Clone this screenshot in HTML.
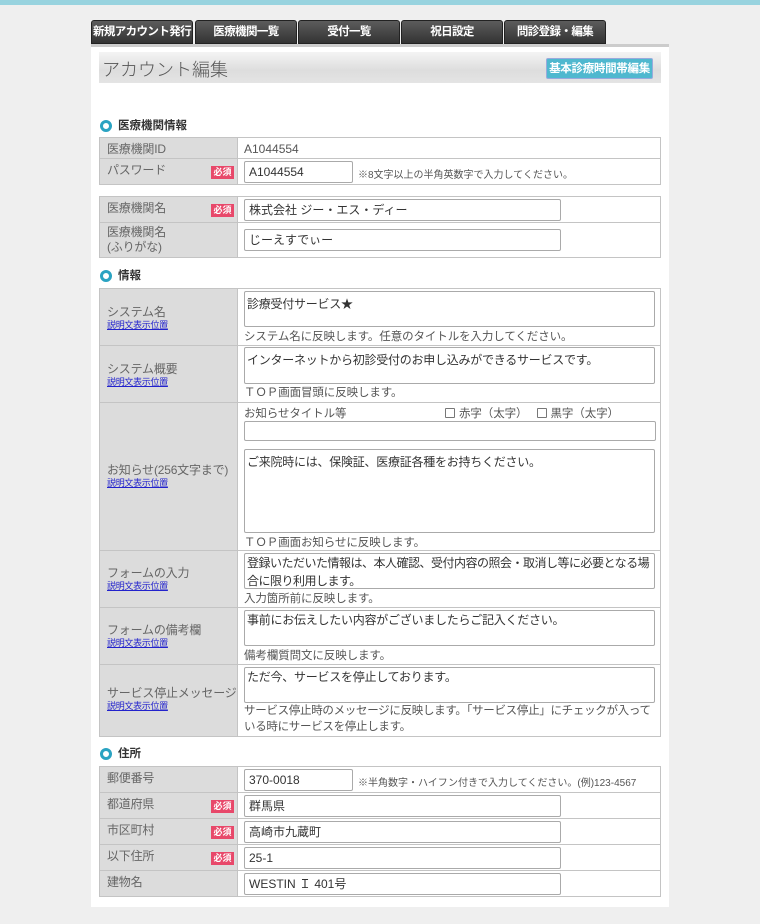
<!DOCTYPE html>
<html><head><meta charset="utf-8"><style>
*{box-sizing:border-box;margin:0;padding:0}
body{width:760px;height:924px;background:#efefef;font-family:"Liberation Sans","Noto Sans CJK JP",sans-serif;font-size:12px;color:#555;position:relative;overflow:hidden}
.a{position:absolute}
.top{left:0;top:0;width:760px;height:5px;background:#98d3df}
.tab{top:20px;height:24px;width:102px;background:linear-gradient(#5c5c5c,#333);color:#fff;font-weight:bold;font-size:11.5px;letter-spacing:-0.6px;white-space:nowrap;text-align:center;line-height:23px;border-radius:3px 3px 0 0;border:1px solid #222}
.panel{left:91px;top:44px;width:578px;height:863px;background:#fff;border-top:3px solid #ccc}
.hd{left:99px;top:52px;width:562px;height:31px;background:linear-gradient(#f4f4f4,#ddd 60%,#e4e4e4);font-size:18px;color:#555;padding:4px 0 0 3px;font-weight:300}
.btn{left:546px;top:58px;width:107px;height:21px;background:#4fb8cf;color:#fff;font-weight:bold;font-size:11.5px;letter-spacing:-0.3px;white-space:nowrap;text-align:center;line-height:20px;border:1px solid #9ad;border-radius:2px}
.sec{left:100px;font-weight:bold;color:#333;font-size:11.5px;padding-left:18px;line-height:14px}
.sec:before{content:"";position:absolute;left:0;top:1px;width:12px;height:12px;border:3.5px solid #2aa3c2;border-radius:50%;box-sizing:border-box}
.lb{left:99px;width:139px;background:#dcdcdc;border:1px solid #c4c4c4;padding:4px 0 0 7px;color:#666;font-size:12px;line-height:15px;white-space:nowrap;letter-spacing:-0.2px}
.vc{left:237px;width:424px;background:#fff;border:1px solid #c4c4c4}
.req{position:absolute;left:111px;width:23px;height:13px;background:#e8486a;color:#fff;font-size:9px;line-height:13px;text-align:center;font-weight:bold;letter-spacing:0}
.lk{color:#22c;text-decoration:underline;font-size:9px;display:block;line-height:11px;letter-spacing:-0.3px}
.in{left:244px;height:22px;border:1px solid #aaa;border-radius:2px;background:#fff;color:#333;padding:3px 4px;font-size:12px;line-height:15px}
.ta{left:244px;width:411px;border:1px solid #aaa;border-radius:2px;background:#fff;color:#333;padding:3px 2px;font-size:12px;line-height:18px;letter-spacing:-0.25px}
.nt{left:244px;font-size:11.5px;color:#555;letter-spacing:-0.1px}
.sm{font-size:10px;color:#555}
.cb{display:inline-block;width:10px;height:10px;border:1px solid #777;vertical-align:-1px;margin-right:4px;border-radius:1px}
</style></head><body>
<div class="a top"></div>
<div class="a tab" style="left:91px">新規アカウント発行</div>
<div class="a tab" style="left:195px">医療機関一覧</div>
<div class="a tab" style="left:298px">受付一覧</div>
<div class="a tab" style="left:401px">祝日設定</div>
<div class="a tab" style="left:504px">問診登録・編集</div>
<div class="a panel"></div>
<div class="a hd">アカウント編集</div>
<div class="a btn">基本診療時間帯編集</div>

<div class="a sec" style="top:119px">医療機関情報</div>
<div class="a lb" style="top:137px;height:22px">医療機関ID</div>
<div class="a vc" style="top:137px;height:22px;padding:4px 6px">A1044554</div>
<div class="a lb" style="top:158px;height:27px">パスワード<span class="req" style="top:7px">必須</span></div>
<div class="a vc" style="top:158px;height:27px"></div>
<div class="a in" style="top:161px;width:109px">A1044554</div>
<div class="a sm" style="left:358px;top:166px">※8文字以上の半角英数字で入力してください。</div>

<div class="a lb" style="top:196px;height:27px">医療機関名<span class="req" style="top:7px">必須</span></div>
<div class="a vc" style="top:196px;height:27px"></div>
<div class="a in" style="top:199px;width:317px">株式会社 ジー・エス・ディー</div>
<div class="a lb" style="top:222px;height:36px;padding-top:2px">医療機関名<br>(ふりがな)</div>
<div class="a vc" style="top:222px;height:36px"></div>
<div class="a in" style="top:229px;width:317px">じーえすでぃー</div>

<div class="a sec" style="top:269px">情報</div>
<div class="a lb" style="top:288px;height:58px;padding-top:16px">システム名<span class="lk">説明文表示位置</span></div>
<div class="a vc" style="top:288px;height:58px"></div>
<div class="a ta" style="top:291px;height:36px">診療受付サービス★</div>
<div class="a nt" style="top:328px">システム名に反映します。任意のタイトルを入力してください。</div>

<div class="a lb" style="top:345px;height:58px;padding-top:16px">システム概要<span class="lk">説明文表示位置</span></div>
<div class="a vc" style="top:345px;height:58px"></div>
<div class="a ta" style="top:347px;height:37px">インターネットから初診受付のお申し込みができるサービスです。</div>
<div class="a nt" style="top:384px">ＴＯＰ画面冒頭に反映します。</div>

<div class="a lb" style="top:402px;height:149px;padding-top:60px">お知らせ(256文字まで)<span class="lk">説明文表示位置</span></div>
<div class="a vc" style="top:402px;height:149px"></div>
<div class="a nt" style="top:405px">お知らせタイトル等</div>
<div class="a nt" style="left:445px;top:405px"><span class="cb"></span>赤字（太字） <span class="cb" style="margin-left:6px"></span>黒字（太字）</div>
<div class="a in" style="top:421px;width:412px;height:20px"></div>
<div class="a ta" style="top:449px;height:84px">ご来院時には、保険証、医療証各種をお持ちください。</div>
<div class="a nt" style="top:534px">ＴＯＰ画面お知らせに反映します。</div>

<div class="a lb" style="top:550px;height:58px;padding-top:15px">フォームの入力<span class="lk">説明文表示位置</span></div>
<div class="a vc" style="top:550px;height:58px"></div>
<div class="a ta" style="top:553px;height:36px;padding-top:0;letter-spacing:-0.5px">登録いただいた情報は、本人確認、受付内容の照会・取消し等に必要となる場合に限り利用します。</div>
<div class="a nt" style="top:590px">入力箇所前に反映します。</div>

<div class="a lb" style="top:607px;height:58px;padding-top:15px">フォームの備考欄<span class="lk">説明文表示位置</span></div>
<div class="a vc" style="top:607px;height:58px"></div>
<div class="a ta" style="top:610px;height:36px;padding-top:0">事前にお伝えしたい内容がございましたらご記入ください。</div>
<div class="a nt" style="top:647px">備考欄質問文に反映します。</div>

<div class="a lb" style="top:664px;height:73px;padding-top:21px">サービス停止メッセージ<span class="lk">説明文表示位置</span></div>
<div class="a vc" style="top:664px;height:73px"></div>
<div class="a ta" style="top:667px;height:36px;padding-top:0">ただ今、サービスを停止しております。</div>
<div class="a nt" style="top:703px;width:414px;line-height:16px;letter-spacing:-0.3px">サービス停止時のメッセージに反映します。「サービス停止」にチェックが入っている時にサービスを停止します。</div>

<div class="a sec" style="top:747px">住所</div>
<div class="a lb" style="top:766px;height:27px">郵便番号</div>
<div class="a vc" style="top:766px;height:27px"></div>
<div class="a in" style="top:769px;width:109px">370-0018</div>
<div class="a sm" style="left:358px;top:774px">※半角数字・ハイフン付きで入力してください。(例)123-4567</div>
<div class="a lb" style="top:792px;height:27px">都道府県<span class="req" style="top:7px">必須</span></div>
<div class="a vc" style="top:792px;height:27px"></div>
<div class="a in" style="top:795px;width:317px">群馬県</div>
<div class="a lb" style="top:818px;height:27px">市区町村<span class="req" style="top:7px">必須</span></div>
<div class="a vc" style="top:818px;height:27px"></div>
<div class="a in" style="top:821px;width:317px">高崎市九蔵町</div>
<div class="a lb" style="top:844px;height:27px">以下住所<span class="req" style="top:7px">必須</span></div>
<div class="a vc" style="top:844px;height:27px"></div>
<div class="a in" style="top:847px;width:317px">25-1</div>
<div class="a lb" style="top:870px;height:27px">建物名</div>
<div class="a vc" style="top:870px;height:27px"></div>
<div class="a in" style="top:873px;width:317px">WESTIN Ｉ 401号</div>
</body></html>
